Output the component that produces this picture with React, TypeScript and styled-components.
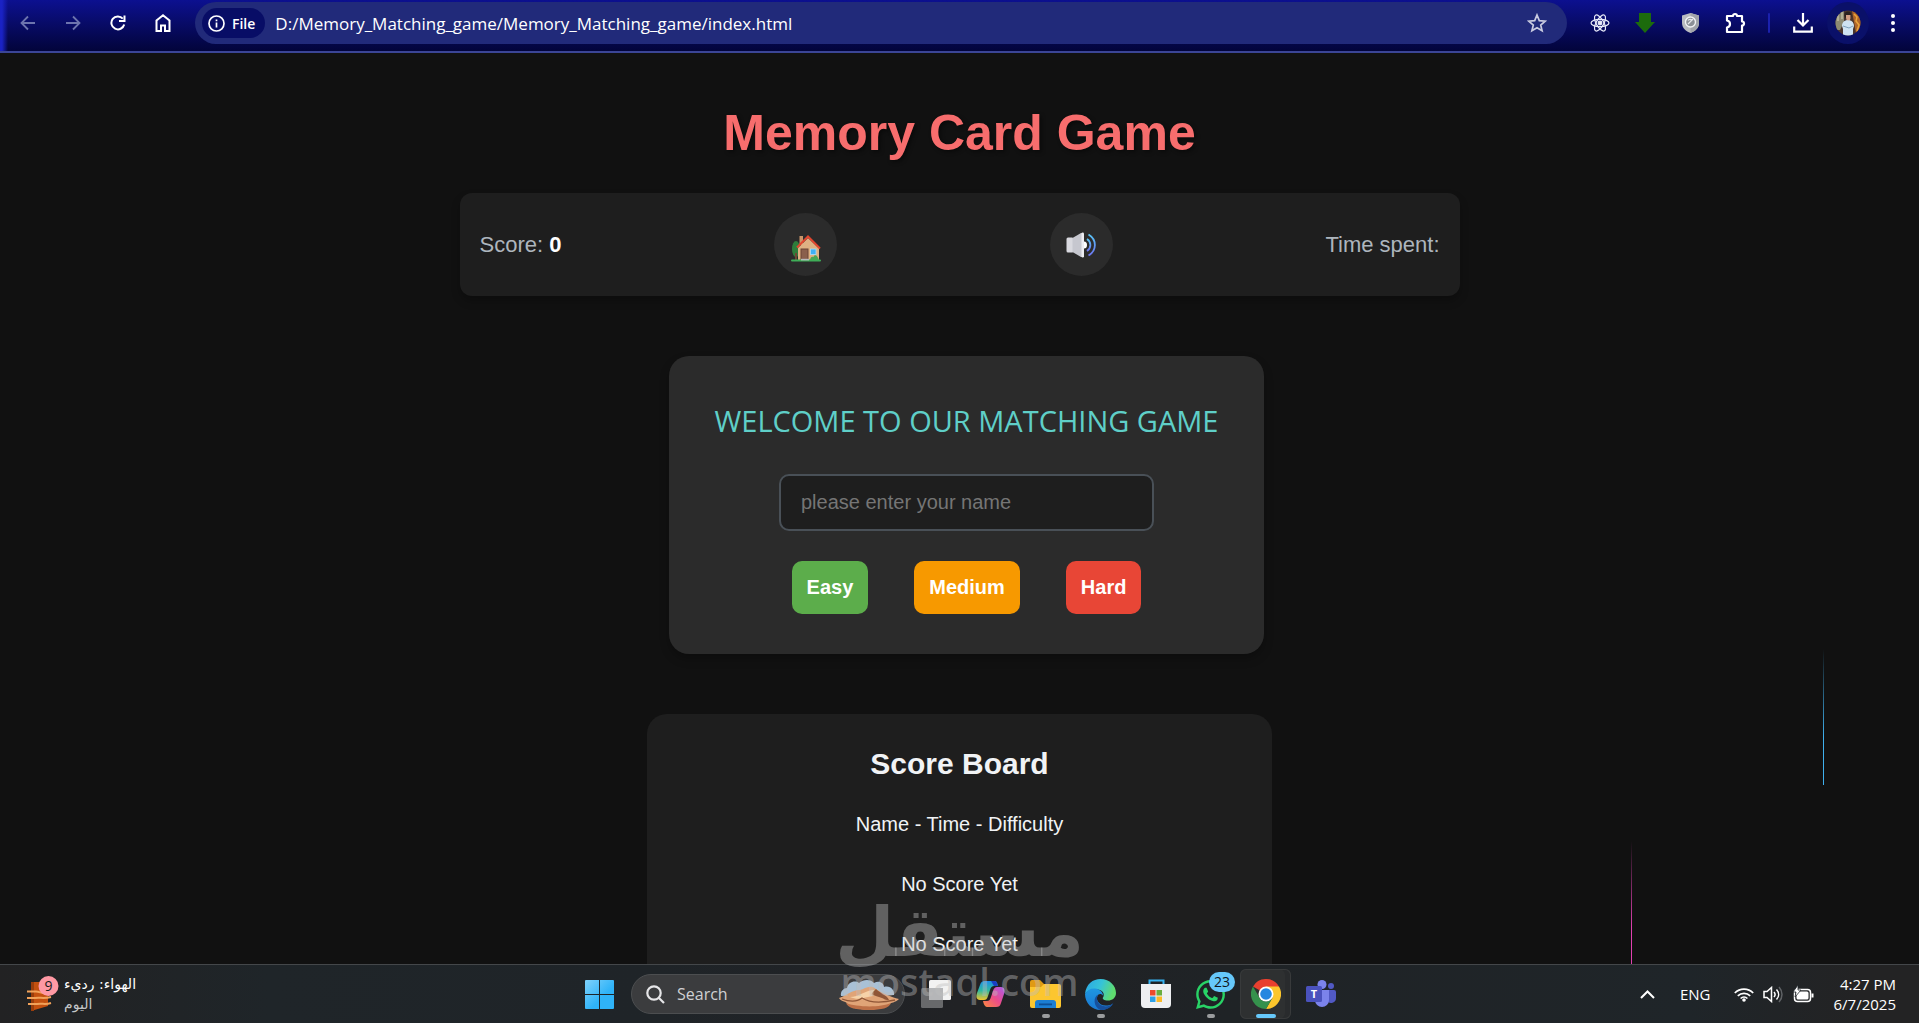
import React, { useState } from "react";
import styled, { createGlobalStyle } from "styled-components";
import { FaWhatsapp } from "react-icons/fa";

const arial = `"Liberation Sans", Arial, sans-serif`;
const segoe = `"Open Sans", "Noto Sans", "DejaVu Sans", sans-serif`;

const Global = createGlobalStyle`
  *, *::before, *::after { box-sizing: border-box; }
  body { margin: 0; background: #111111; color: #f1f3f5; font-family: ${arial}; }
  button, input { font: inherit; color: inherit; }
  button { border: 0; padding: 0; background: none; cursor: pointer; }
  svg { display: block; }
`;

const Screen = styled.div`
  position: relative;
  display: flex;
  flex-direction: column;
  height: 100vh;
  overflow: hidden;
`;

/* ---------- browser toolbar ---------- */

const Toolbar = styled.header`
  display: flex;
  align-items: center;
  flex: none;
  padding: 2px 8px 7px 10px;
  border-bottom: 2px solid #3b4596;
  background:
    linear-gradient(90deg, #1a22c4 0, #1a22c4 2px, transparent 8px),
    linear-gradient(180deg, #0c1090 0, #080b68 45%, #02043a 100%);
  font-family: ${segoe};
`;

const ToolGroup = styled.div<{ $gap: number }>`
  display: flex;
  align-items: center;
  gap: ${(p) => p.$gap}px;
`;

const ToolButton = styled.button<{ $dim?: boolean }>`
  display: grid;
  place-items: center;
  width: 36px;
  height: 36px;
  color: ${(p) => (p.$dim ? "#6d74ae" : "#ffffff")};
`;

const AddressBar = styled.div`
  display: flex;
  align-items: center;
  flex: 1;
  min-width: 0;
  height: 42px;
  margin: 0 15px 0 14px;
  padding: 0 12px 0 7px;
  border-radius: 21px;
  background: #212a7a;
`;

const FileChip = styled.button`
  display: flex;
  align-items: center;
  gap: 7px;
  height: 30px;
  padding: 0 10px 0 6px;
  border-radius: 15px;
  background: #080d66;
  font-size: 14px;
  font-weight: 600;
  color: #ffffff;
`;

const UrlInput = styled.input`
  flex: 1;
  min-width: 0;
  margin-left: 10px;
  padding: 0;
  border: 0;
  outline: 0;
  background: transparent;
  font-size: 17px;
  color: #ffffff;
`;

const Divider = styled.span`
  width: 2px;
  height: 20px;
  margin: 0 15px;
  border-radius: 1px;
  background: #1b21ae;
`;

const Avatar = styled.button`
  display: grid;
  place-items: center;
  width: 42px;
  height: 42px;
  border-radius: 50%;
  background: #0a1069;
`;

/* ---------- game page ---------- */

const Page = styled.main`
  position: relative;
  display: flex;
  flex-direction: column;
  align-items: center;
  flex: 1;
  min-height: 0;
  padding: 51px 20px 0;
  overflow: hidden;
`;

const Title = styled.h1`
  margin: 0 0 31px;
  font-size: 50px;
  line-height: 58px;
  color: #f76d6d;
  text-shadow: 2px 2px 4px rgba(0, 0, 0, 0.45);
`;

const StatusBar = styled.section`
  display: flex;
  align-items: center;
  justify-content: space-between;
  flex: none;
  width: 100%;
  max-width: 1000px;
  padding: 20px;
  border-radius: 12px;
  background: #1e1e1e;
  box-shadow: 0 5px 8px rgba(0, 0, 0, 0.25);
  font-size: 22px;
  color: #adb5bd;

  strong { color: #ffffff; }
`;

const RoundButton = styled.button`
  display: grid;
  place-items: center;
  width: 63px;
  height: 63px;
  border-radius: 50%;
  background: #2b2b2b;
`;

const Welcome = styled.form`
  display: flex;
  flex-direction: column;
  align-items: center;
  flex: none;
  width: 100%;
  max-width: 595px;
  margin: 60px 0 60px 14px;
  padding: 45px 20px 40px;
  border-radius: 20px;
  background: #2b2b2b;
  box-shadow: 0 5px 10px rgba(0, 0, 0, 0.25);
  font-size: 20px;
`;

const WelcomeTitle = styled.h2`
  margin: 0 0 33px;
  font: 400 29px/40px ${segoe};
  color: #5fcfc8;
  text-align: center;
`;

const NameInput = styled.input`
  width: 375px;
  max-width: 100%;
  height: 57px;
  margin-bottom: 30px;
  padding: 0 20px;
  border: 2px solid #495057;
  border-radius: 10px;
  outline: 0;
  background: #1e1e1e;

  &::placeholder { color: #757575; opacity: 1; }
`;

const Levels = styled.div`
  display: flex;
  gap: 46px;
`;

const LevelButton = styled.button<{ $color: string }>`
  height: 53px;
  padding: 0 15px;
  border-radius: 10px;
  background: ${(p) => p.$color};
  font-weight: 700;
  color: #ffffff;
`;

const Board = styled.section`
  flex: none;
  width: 100%;
  max-width: 625px;
  padding: 30px 20px;
  border-radius: 20px;
  background: #1e1e1e;
  text-align: center;
  font-size: 20px;
`;

const BoardTitle = styled.h2`
  margin: 0 0 10px;
  font-size: 30px;
  line-height: 40px;
`;

const BoardRow = styled.p`
  margin: 0;
  padding: 18px 0;
  line-height: 24px;
`;

const Streak = styled.span<{ $color: string; $left: number; $top: number; $height: number }>`
  position: absolute;
  left: ${(p) => p.$left}%;
  top: ${(p) => p.$top}px;
  width: 1px;
  height: ${(p) => p.$height}px;
  background: linear-gradient(180deg, transparent, ${(p) => p.$color} 65%);
`;

/* ---------- taskbar ---------- */

const Taskbar = styled.footer`
  display: grid;
  grid-template-columns: 1fr auto 1fr;
  align-items: center;
  flex: none;
  height: 59px;
  border-top: 1px solid #44474a;
  background: linear-gradient(90deg, #222223 0, #1f2529 14%, #1f2428 34%, #212225 50%, #1f2326 64%, #1f2529 88%, #232324 97%);
  font-family: ${segoe};
`;

const Weather = styled.button`
  display: flex;
  align-items: center;
  gap: 5px;
  justify-self: start;
  padding-left: 26px;
  font: 14px/20px "DejaVu Sans", sans-serif;
  text-align: left;
  color: #ffffff;
`;

const WeatherText = styled.span`
  display: block;
`;

const Muted = styled.span`
  display: block;
  color: #c4c6c8;
`;

const Apps = styled.nav`
  display: flex;
  align-items: center;
  padding-left: 14px;
`;

const StartButton = styled.button`
  margin-right: 17px;
`;

const SearchBox = styled.label`
  display: flex;
  align-items: center;
  width: 274px;
  height: 40px;
  margin-right: 3px;
  padding: 0 4px 0 14px;
  border: 1px solid #4c4e50;
  border-radius: 20px;
  background: #3b3c3e;
`;

const SearchInput = styled.input`
  flex: 1;
  min-width: 0;
  margin-left: 12px;
  padding: 0;
  border: 0;
  outline: 0;
  background: transparent;
  font-size: 16px;

  &::placeholder { color: #cfd0d2; opacity: 1; }
`;

const AppButton = styled.button<{ $active?: boolean }>`
  position: relative;
  display: grid;
  place-items: center;
  width: 51px;
  height: 50px;
  margin: 0 2px;
  border-radius: 6px;
  background: ${(p) => (p.$active ? "#2e3031" : "transparent")};
  box-shadow: ${(p) => (p.$active ? "inset 0 0 0 1px #383a3b, inset -6px 0 0 #292b2d" : "none")};
`;

const Running = styled.span<{ $active?: boolean }>`
  position: absolute;
  left: 50%;
  bottom: 1px;
  width: ${(p) => (p.$active ? 20 : 8)}px;
  height: 4px;
  border-radius: 2px;
  background: ${(p) => (p.$active ? "#66c8fa" : "#9a9c9e")};
  transform: translateX(-50%);
`;

const Badge = styled.span`
  position: absolute;
  top: 3px;
  right: 1px;
  min-width: 26px;
  height: 20px;
  border-radius: 10px;
  background: #66c8fa;
  font-size: 14px;
  line-height: 20px;
  color: #10161a;
`;

const Tray = styled.div`
  display: flex;
  align-items: center;
  justify-self: end;
  gap: 9px;
  padding-right: 23px;
  font-size: 15px;
  line-height: 20px;
  color: #ffffff;
`;

const TrayButton = styled.button<{ $gapAfter?: number }>`
  margin-right: ${(p) => p.$gapAfter ?? 0}px;
`;

const Clock = styled.button`
  margin-left: 11px;
  text-align: right;

  time { display: block; }
`;

const Watermark = styled.div`
  position: absolute;
  left: 50%;
  bottom: 28px;
  display: flex;
  flex-direction: column;
  align-items: center;
  color: rgba(190, 190, 190, 0.42);
  pointer-events: none;
  transform: translateX(-50%);
`;

const WatermarkArabic = styled.span`
  font: 700 68px/68px "DejaVu Sans", sans-serif;
`;

const WatermarkLatin = styled.span`
  font: 600 38px/28px "Open Sans", sans-serif;
`;

/* ---------- drawings ---------- */

const stroke = { fill: "none", stroke: "currentColor", strokeWidth: 2 } as const;

const BackIcon = () => (
  <svg width="16" height="16" viewBox="0 0 16 16" {...stroke}><path d="M15 8H2M8 1.500 1.500 8 8 14.500" strokeWidth="1.800" /></svg>
);
const ForwardIcon = () => (
  <svg width="16" height="16" viewBox="0 0 16 16" {...stroke}><path d="M1 8h13M8 1.500 14.500 8 8 14.500" strokeWidth="1.800" /></svg>
);
const ReloadIcon = () => (
  <svg width="16" height="16" viewBox="0 0 16 16" {...stroke}>
    <path d="M14.200 9.500A6.500 6.500 0 1 1 12.800 3.600" /><path d="M14.500 0.500V6H9" />
  </svg>
);
const HomeIcon = () => (
  <svg width="16" height="18" viewBox="0 0 16 18" {...stroke}><path d="M1.500 17V6.500L8 1.300l6.500 5.200V17H10v-5.500H6V17Z" /></svg>
);
const InfoIcon = () => (
  <svg width="17" height="17" viewBox="0 0 17 17" {...stroke} strokeWidth="1.700">
    <circle cx="8.500" cy="8.500" r="7.500" /><path d="M8.500 7.500V12.500M8.500 4.500v1.800" />
  </svg>
);
const StarIcon = () => (
  <svg width="20" height="20" viewBox="0 0 20 20" fill="none" stroke="#c9cbe0" strokeWidth="1.700">
    <path d="m10 2 2.300 5.600 6 .500-4.600 3.900 1.400 5.800L10 14.700l-5.100 3.100 1.400-5.800L1.700 8.100l6-.5Z" />
  </svg>
);
const ReactIcon = () => (
  <svg width="20" height="20" viewBox="0 0 20 20" fill="none" stroke="#e8eaf8" strokeWidth="1.200">
    <circle cx="10" cy="10" r="1.800" fill="#e8eaf8" />
    {[0, 60, 120].map((a) => <ellipse key={a} cx="10" cy="10" rx="9" ry="3.700" transform={`rotate(${a} 10 10)`} />)}
  </svg>
);
const GreenArrow = () => (
  <svg width="20" height="20" viewBox="0 0 20 20"><path d="M4 0h12v9h4L10 20 0 9h4Z" fill="#1c6b0c" /></svg>
);
const ShieldIcon = () => (
  <svg width="17" height="20" viewBox="0 0 17 20">
    <path d="M8.500 0 17 2.500V10c0 5-4 8.500-8.500 10C4 18.500 0 15 0 10V2.500Z" fill="#b9bbc0" />
    <path d="M8.500 0 17 2.500V10c0 5-4 8.500-8.500 10Z" fill="#a1a4aa" />
    <circle cx="8.500" cy="9" r="5" fill="#8c9097" stroke="#f2f3f5" strokeWidth="1.400" />
    <path d="m6 11 5-5M6 7.500c1-1.500 3-1.500 4-.500" stroke="#e4e6e9" strokeWidth="1.300" fill="none" />
  </svg>
);
const PuzzleIcon = () => (
  <svg width="22" height="22" viewBox="0 0 22 22" fill="none" stroke="#fff" strokeWidth="2.200" strokeLinejoin="round">
    <path d="M3 4H9a2 2 0 0 1 4 0h5v5.500a2 2 0 0 1 0 4V20H3v-4.500c2.500-.500 3-2 3-3.500s-.500-3-3-3.500Z" />
  </svg>
);
const DownloadIcon = () => (
  <svg width="20" height="20" viewBox="0 0 20 20" fill="none" stroke="#fff" strokeWidth="2.200">
    <path d="M10 0v12M4.500 7 10 12.500 15.500 7M1.200 13.500v5.200h17.600v-5.200" />
  </svg>
);
const AvatarPicture = () => (
  <svg width="26" height="26" viewBox="0 0 26 26">
    <clipPath id="face"><circle cx="13" cy="13" r="12.500" /></clipPath>
    <g clipPath="url(#face)">
      <rect width="26" height="26" fill="#4a342c" />
      <path d="M0 0h9v12l-4 8H0Z" fill="#8d8a72" />
      <path d="M3 2v9M7 1v8" stroke="#d8d2b8" strokeWidth="1" />
      <path d="M17 1h9v22h-5Z" fill="#b0662a" />
      <path d="m19 4 3 3-1 4 3 4-2 6" stroke="#e9a43c" strokeWidth="1.500" fill="none" />
      <path d="M7 16c0-4 3-6 6-6s6 2 6 6l-1 3v8H8v-8Z" fill="#cfe3f2" />
      <circle cx="13" cy="5" r="3.500" fill="#2b211f" />
      <path d="M11 5h4.500v3a2.200 2.500 0 0 1-4.500 0Z" fill="#d29d83" />
      <path d="m8 16 6 2 4-2" stroke="#7fa2bd" fill="none" />
    </g>
  </svg>
);
const DotsIcon = () => (
  <svg width="4" height="18" viewBox="0 0 4 18" fill="#fff"><circle cx="2" cy="2" r="2" /><circle cx="2" cy="9" r="2" /><circle cx="2" cy="16" r="2" /></svg>
);

const HouseIcon = () => (
  <svg width="30" height="34" viewBox="0 -7 30 34">
    <ellipse cx="5" cy="14" rx="4" ry="8" fill="#2f7d3b" />
    <rect x="4" y="18" width="2" height="7" fill="#6b4a35" />
    <rect x="8.500" y="1" width="3.500" height="9" fill="#c99469" />
    <path d="M7 13 17 3l11 10.500V25H7Z" fill="#deb183" />
    <path d="M6 12.500 17 1.500l12 12" fill="none" stroke="#e2462f" strokeWidth="2" />
    <rect x="10" y="14" width="7" height="11" fill="#8a5f4c" stroke="#6b4534" strokeWidth="1" />
    <rect x="19.500" y="14" width="5.500" height="5.500" fill="#3fb0f5" stroke="#a8dcfb" strokeWidth="0.800" />
    <path d="M19 26c0-4 2-5 3.500-4 1-3 4.500-2 5.500 4Z" fill="#4aa655" />
    <rect y="24.500" width="30" height="2" rx="1" fill="#3fae58" />
    <rect x="10" y="23.800" width="8" height="1.600" fill="#b7b9bc" />
  </svg>
);
const SpeakerIcon = () => (
  <svg width="30" height="26" viewBox="0 0 30 26" fill="none">
    <defs>
      <linearGradient id="wave" x1="0" y1="0" x2="0" y2="1"><stop offset="0" stopColor="#58c4f5" /><stop offset="1" stopColor="#6c74f0" /></linearGradient>
    </defs>
    <rect x="0.500" y="5.500" width="7" height="15" rx="1.500" fill="#d9d9df" />
    <path d="M6.500 6 15 1h2v24h-2L6.500 20Z" fill="#c6c7cf" />
    <rect x="15.500" y=".500" width="2.500" height="25" rx="1.200" fill="#ececf1" />
    <path d="M18 9.500a3 3.500 0 0 1 0 7Z" fill="#fff" />
    <path d="M22.500 2.500c8.500 5 8.500 16 0 21" stroke="url(#wave)" strokeWidth="1.800" />
    <path d="M21 7c4.500 3 4.500 9 0 12" stroke="url(#wave)" strokeWidth="1.800" />
  </svg>
);

const WeatherIcon = () => (
  <svg width="33" height="36" viewBox="0 0 33 36">
    <path d="M5 6h17v24l-17 5Z" fill="#c4500f" />
    <path d="M5 6h3v29H5Z" fill="#9a3d0c" />
    <path d="M1 15.500h9c4 0 5 2 9 1.500h6M1 22h8c5-1 8 1 16-1M2 28h9c5-1 8 1 14-1" fill="none" stroke="#f2a25a" strokeWidth="2" />
    <circle cx="22.500" cy="10" r="10" fill="#ff99a4" />
    <text x="22.500" y="15" textAnchor="middle" fontFamily="Open Sans, sans-serif" fontSize="14" fill="#1c1c1c">9</text>
  </svg>
);
const WindowsIcon = () => (
  <svg width="29" height="29" viewBox="0 0 29 29">
    <defs><linearGradient id="win" x1="0" y1="0" x2="1" y2="1"><stop offset="0" stopColor="#7fd2fb" /><stop offset="0.600" stopColor="#2fb3f8" /></linearGradient></defs>
    <path fill="url(#win)" d="M0 1a1 1 0 0 1 1-1h13v14H0ZM15 0h13a1 1 0 0 1 1 1v13H15ZM0 15h14v14H1a1 1 0 0 1-1-1ZM15 15h14v13a1 1 0 0 1-1 1H15Z" />
  </svg>
);
const MagnifierIcon = () => (
  <svg width="19" height="19" viewBox="0 0 19 19" fill="none" stroke="#e6e6e8" strokeWidth="2.200"><circle cx="8" cy="8" r="6.700" /><path d="m12.700 12.700 5.300 5.300" /></svg>
);
const DunesPicture = () => (
  <svg width="62" height="31" viewBox="0 0 62 31">
    <path d="M3 17C2 12 6 9 9 9c1-6 8-8 12-5 4-4 12-4 15 0 5-3 10 0 10 4 6-2 11 3 10 8Z" fill="#a9c1d6" />
    <path d="M1 19c8-3 15-9 21-8 5-1 10-6 16-1 6 4 15 8 23 10-4 4-8 3-10 6-8 6-34 6-41 0-1-4-7-3-9-7Z" fill="#e0a477" />
    <path d="M12 18c9 0 17-8 26-7-4 3-6 4-3 6-8 1-14 5-23 1Z" fill="#f6d2a8" />
    <path d="M38 10c-6 5-4 6 3 8s4 3 10 3c-2-5-9-7-13-11Z" fill="#8f5637" />
    <path d="M8 24c10 4 34 5 45 0-2 5-9 7-22 7S10 29 8 24Z" fill="#bd7047" />
    <path d="M4 20c8 3 15 3 20-1 8 5 20 5 33 2" fill="none" stroke="#8f5637" strokeWidth="1.300" />
  </svg>
);
const TaskViewIcon = () => (
  <svg width="30" height="29" viewBox="0 0 30 29">
    <rect x="0" y="8" width="22" height="20" rx="1.500" fill="#68696b" />
    <rect x="8" y="0" width="22" height="20" rx="1.500" fill="#f2f2f2" />
    <path d="M8 8h14v12H9.500A1.500 1.500 0 0 1 8 18.500Z" fill="#b5b6b8" />
  </svg>
);
const CopilotIcon = () => (
  <svg width="29" height="26" viewBox="0 0 29 26">
    <defs>
      <linearGradient id="cpA" x1="0" y1="0" x2="0" y2="1"><stop offset="0" stopColor="#1b8fe8" /><stop offset=".5" stopColor="#2fb9a0" /><stop offset="1" stopColor="#f2c52c" /></linearGradient>
      <linearGradient id="cpB" x1="1" y1="0" x2="0" y2="1"><stop offset="0" stopColor="#a95cf0" /><stop offset=".5" stopColor="#ec4b8b" /><stop offset="1" stopColor="#fb8a3c" /></linearGradient>
    </defs>
    <path d="M9 0h9c3 0 3 2 4 5h-4c-2 0-3 1-4 4l-2 6c-1 3-2 4-4 4H4c-4 0-4-4-3-7L4 4c1-3 2-4 5-4Z" fill="url(#cpA)" />
    <path d="M20 26h-8c-3 0-4-2-5-6h4c2 0 3-1 4-4l2-6c1-3 2-4 4-4h4c4 0 4 4 3 7l-3 9c-1 3-2 4-5 4Z" fill="url(#cpB)" />
    <path d="M15 0h3c3 0 3 2 4 5h-4Z" fill="#1a3fc4" />
  </svg>
);
const FolderIcon = () => (
  <svg width="31" height="28" viewBox="0 0 31 28">
    <path d="M0 2a2 2 0 0 1 2-2h8l4 4v6H0Z" fill="#e09a14" />
    <path d="M0 7h11l3-3h15a2 2 0 0 1 2 2v20a2 2 0 0 1-2 2H2a2 2 0 0 1-2-2Z" fill="#fcc62f" />
    <path d="M5 28v-5a3 3 0 0 1 3-3h15a3 3 0 0 1 3 3v5Z" fill="#1b7ed3" />
    <rect x="9" y="23.500" width="13" height="1.800" fill="#0d4f96" />
  </svg>
);
const EdgeIcon = () => (
  <svg width="31" height="31" viewBox="0 0 31 31">
    <defs>
      <linearGradient id="edA" x1="0" y1="0" x2="1" y2=".3"><stop offset="0" stopColor="#2aa5e6" /><stop offset=".55" stopColor="#36c3d8" /><stop offset="1" stopColor="#5fdc6e" /></linearGradient>
      <linearGradient id="edB" x1="0" y1="0" x2="0" y2="1"><stop offset="0" stopColor="#1f97e2" /><stop offset="1" stopColor="#1a78d2" /></linearGradient>
    </defs>
    <path d="M0 15C1 5 8 0 15.500 0 25 0 31 7 31 14c0 5-4 7.500-8 7.500-4 0-6-1.500-5-3 1.500-2 1-6-3-7.500C9 9 3 11 0 15Z" fill="url(#edA)" />
    <path d="M0 15c2-4 6-6 10-5.500 5 .500 8 4 8 7-1-1.500-3-2-4.500-1-4 4 0 12 9 11 2 0 4-1 5-1.500C25 29 20 31 15.500 31 7 31 0 24 0 15Z" fill="url(#edB)" />
    <path d="M13.500 15.500c-3 3-2 11 7 12 3 0 6-1.500 8-4-2 5-7 7.500-13 7.500C8 28 8 17 13.500 15.500Z" fill="#17509c" />
  </svg>
);
const StoreIcon = () => (
  <svg width="30" height="30" viewBox="0 0 30 30">
    <path d="M8.500 6V1.500h14V6" fill="none" stroke="#37b1ef" strokeWidth="2" />
    <path d="M0 5h30v20a4 4 0 0 1-4 4H4a4 4 0 0 1-4-4Z" fill="#eeeff1" />
    <rect x="9" y="11" width="5.500" height="5.500" fill="#ec4a2c" /><rect x="15.500" y="11" width="5.500" height="5.500" fill="#6aad3f" />
    <rect x="9" y="17.500" width="5.500" height="5.500" fill="#2da0e6" /><rect x="15.500" y="17.500" width="5.500" height="5.500" fill="#fbba27" />
  </svg>
);
const ChromeIcon = () => (
  <svg width="30" height="30" viewBox="0 0 48 48">
    <path d="M24 24 3.200 12A24 24 0 0 1 44.800 12Z" fill="#e8402f" />
    <path d="M24 12h20.800A24 24 0 0 1 24 48l10.400-18Z" fill="#fcc62c" />
    <path d="M3.200 12 13.600 30A12 12 0 0 0 34.400 30L24 48A24 24 0 0 1 3.200 12Z" fill="#35914c" />
    <circle cx="24" cy="24" r="12" fill="#fff" /><circle cx="24" cy="24" r="9.300" fill="#2487e0" />
  </svg>
);
const TeamsIcon = () => (
  <svg width="30" height="28" viewBox="0 0 30 28">
    <circle cx="25" cy="6" r="3" fill="#5159c4" /><path d="M21 10h7a2 2 0 0 1 2 2v6a5 5 0 0 1-9 3Z" fill="#5159c4" />
    <circle cx="16" cy="4.500" r="4.500" fill="#7b83eb" /><path d="M9 10h14v10a7 7 0 0 1-14 0Z" fill="#7b83eb" />
    <rect y="6" width="16" height="16" rx="1.500" fill="#4a52bd" />
    <text x="8" y="18" textAnchor="middle" fontFamily="Open Sans, sans-serif" fontWeight="700" fontSize="11" fill="#fff">T</text>
  </svg>
);
const ChevronUp = () => (
  <svg width="15" height="9" viewBox="0 0 15 9" {...stroke}><path d="m1 8 6.500-6.500L14 8" /></svg>
);
const WifiIcon = () => (
  <svg width="20" height="15" viewBox="0 0 20 15" {...stroke} strokeWidth="1.700">
    <path d="M.800 6a13 13 0 0 1 18.400 0M3.800 8.800a9 9 0 0 1 12.400 0M6.600 11.500a5 5 0 0 1 6.800 0" /><circle cx="10" cy="13" r="1.800" fill="currentColor" stroke="none" />
  </svg>
);
const VolumeIcon = () => (
  <svg width="21" height="17" viewBox="0 0 21 17" {...stroke} strokeWidth="1.500">
    <path d="M1 5.500h3L8.500 1.500v14L4 11.500H1Z" /><path d="M11 6c1.300 1.500 1.300 3.500 0 5M13.500 3.500c2.800 3 2.800 7 0 10" />
    <path d="M16 1c4 4.500 4 10.500 0 15" stroke="#5f6265" />
  </svg>
);
const BatteryIcon = () => (
  <svg width="21" height="18" viewBox="0 0 21 18">
    <rect x="1.500" y="4.500" width="16" height="12" rx="3" fill="none" stroke="#fff" strokeWidth="1.500" />
    <rect x="3.500" y="6.500" width="12" height="8" rx="1.500" fill="#fff" /><path d="M18.500 8.500h2v4h-2Z" fill="#fff" />
    <path d="M5 0 0 7h3l-1 5 6-7H5Z" fill="#fff" stroke="#1f2529" strokeWidth=".800" />
  </svg>
);

/* ---------- app ---------- */

const levels = [
  { name: "Easy", color: "#5cad4b" },
  { name: "Medium", color: "#f79900" },
  { name: "Hard", color: "#e84636" },
];

const boardRows = ["Name - Time - Difficulty", "No Score Yet", "No Score Yet"];

const apps = [
  { name: "Task View", icon: <TaskViewIcon /> },
  { name: "Copilot", icon: <CopilotIcon /> },
  { name: "File Explorer", icon: <FolderIcon />, running: true },
  { name: "Edge", icon: <EdgeIcon />, running: true },
  { name: "Microsoft Store", icon: <StoreIcon /> },
  { name: "WhatsApp", icon: <FaWhatsapp size={33} color="#28d366" />, running: true, badge: 23 },
  { name: "Chrome", icon: <ChromeIcon />, running: true, active: true },
  { name: "Teams", icon: <TeamsIcon /> },
];

export default function App() {
  const [url, setUrl] = useState("D:/Memory_Matching_game/Memory_Matching_game/index.html");
  const [player, setPlayer] = useState("");

  return (
    <Screen>
      <Global />
      <Toolbar>
        <ToolGroup $gap={9}>
          <ToolButton $dim aria-label="Back"><BackIcon /></ToolButton>
          <ToolButton $dim aria-label="Forward"><ForwardIcon /></ToolButton>
          <ToolButton aria-label="Reload"><ReloadIcon /></ToolButton>
          <ToolButton aria-label="Home"><HomeIcon /></ToolButton>
        </ToolGroup>
        <AddressBar>
          <FileChip><InfoIcon />File</FileChip>
          <UrlInput aria-label="Address" value={url} onChange={(e) => setUrl(e.target.value)} />
          <ToolButton aria-label="Bookmark this page"><StarIcon /></ToolButton>
        </AddressBar>
        <ToolGroup $gap={9}>
          <ToolButton aria-label="React Developer Tools"><ReactIcon /></ToolButton>
          <ToolButton aria-label="Download manager"><GreenArrow /></ToolButton>
          <ToolButton aria-label="Shield"><ShieldIcon /></ToolButton>
          <ToolButton aria-label="Extensions"><PuzzleIcon /></ToolButton>
        </ToolGroup>
        <Divider />
        <ToolGroup $gap={6}>
          <ToolButton aria-label="Downloads"><DownloadIcon /></ToolButton>
          <Avatar aria-label="Profile"><AvatarPicture /></Avatar>
          <ToolButton aria-label="Menu"><DotsIcon /></ToolButton>
        </ToolGroup>
      </Toolbar>

      <Page>
        <Title>Memory Card Game</Title>
        <StatusBar>
          <span>Score: <strong>0</strong></span>
          <RoundButton aria-label="Home page"><HouseIcon /></RoundButton>
          <RoundButton aria-label="Sound"><SpeakerIcon /></RoundButton>
          <span>Time spent:</span>
        </StatusBar>

        <Welcome onSubmit={(e) => e.preventDefault()}>
          <WelcomeTitle>WELCOME TO OUR MATCHING GAME</WelcomeTitle>
          <NameInput
            aria-label="Your name"
            placeholder="please enter your name"
            value={player}
            onChange={(e) => setPlayer(e.target.value)}
          />
          <Levels>
            {levels.map((l) => (
              <LevelButton key={l.name} type="button" $color={l.color}>{l.name}</LevelButton>
            ))}
          </Levels>
        </Welcome>

        <Board>
          <BoardTitle>Score Board</BoardTitle>
          {boardRows.map((row, i) => <BoardRow key={i}>{row}</BoardRow>)}
        </Board>

        <Streak $color="#3fb0ee" $left={95} $top={596} $height={136} />
        <Streak $color="#e040b0" $left={85} $top={788} $height={134} />
      </Page>

      <Taskbar>
        <Weather>
          <WeatherIcon />
          <WeatherText lang="ar">
            <bdi>الهواء: رديء</bdi>
            <Muted>اليوم</Muted>
          </WeatherText>
        </Weather>
        <Apps>
          <StartButton aria-label="Start"><WindowsIcon /></StartButton>
          <SearchBox>
            <MagnifierIcon />
            <SearchInput aria-label="Search" placeholder="Search" />
            <DunesPicture />
          </SearchBox>
          {apps.map((a) => (
            <AppButton key={a.name} aria-label={a.name} $active={a.active}>
              {a.icon}
              {a.badge && <Badge>{a.badge}</Badge>}
              {a.running && <Running $active={a.active} />}
            </AppButton>
          ))}
        </Apps>
        <Tray>
          <TrayButton aria-label="Show hidden icons" $gapAfter={16}><ChevronUp /></TrayButton>
          <TrayButton $gapAfter={14}>ENG</TrayButton>
          <TrayButton aria-label="Network"><WifiIcon /></TrayButton>
          <TrayButton aria-label="Volume"><VolumeIcon /></TrayButton>
          <TrayButton aria-label="Battery"><BatteryIcon /></TrayButton>
          <Clock>
            <time>4:27 PM</time>
            <time>6/7/2025</time>
          </Clock>
        </Tray>
      </Taskbar>

      <Watermark>
        <WatermarkArabic lang="ar">مستقل</WatermarkArabic>
        <WatermarkLatin>mostaql.com</WatermarkLatin>
      </Watermark>
    </Screen>
  );
}
